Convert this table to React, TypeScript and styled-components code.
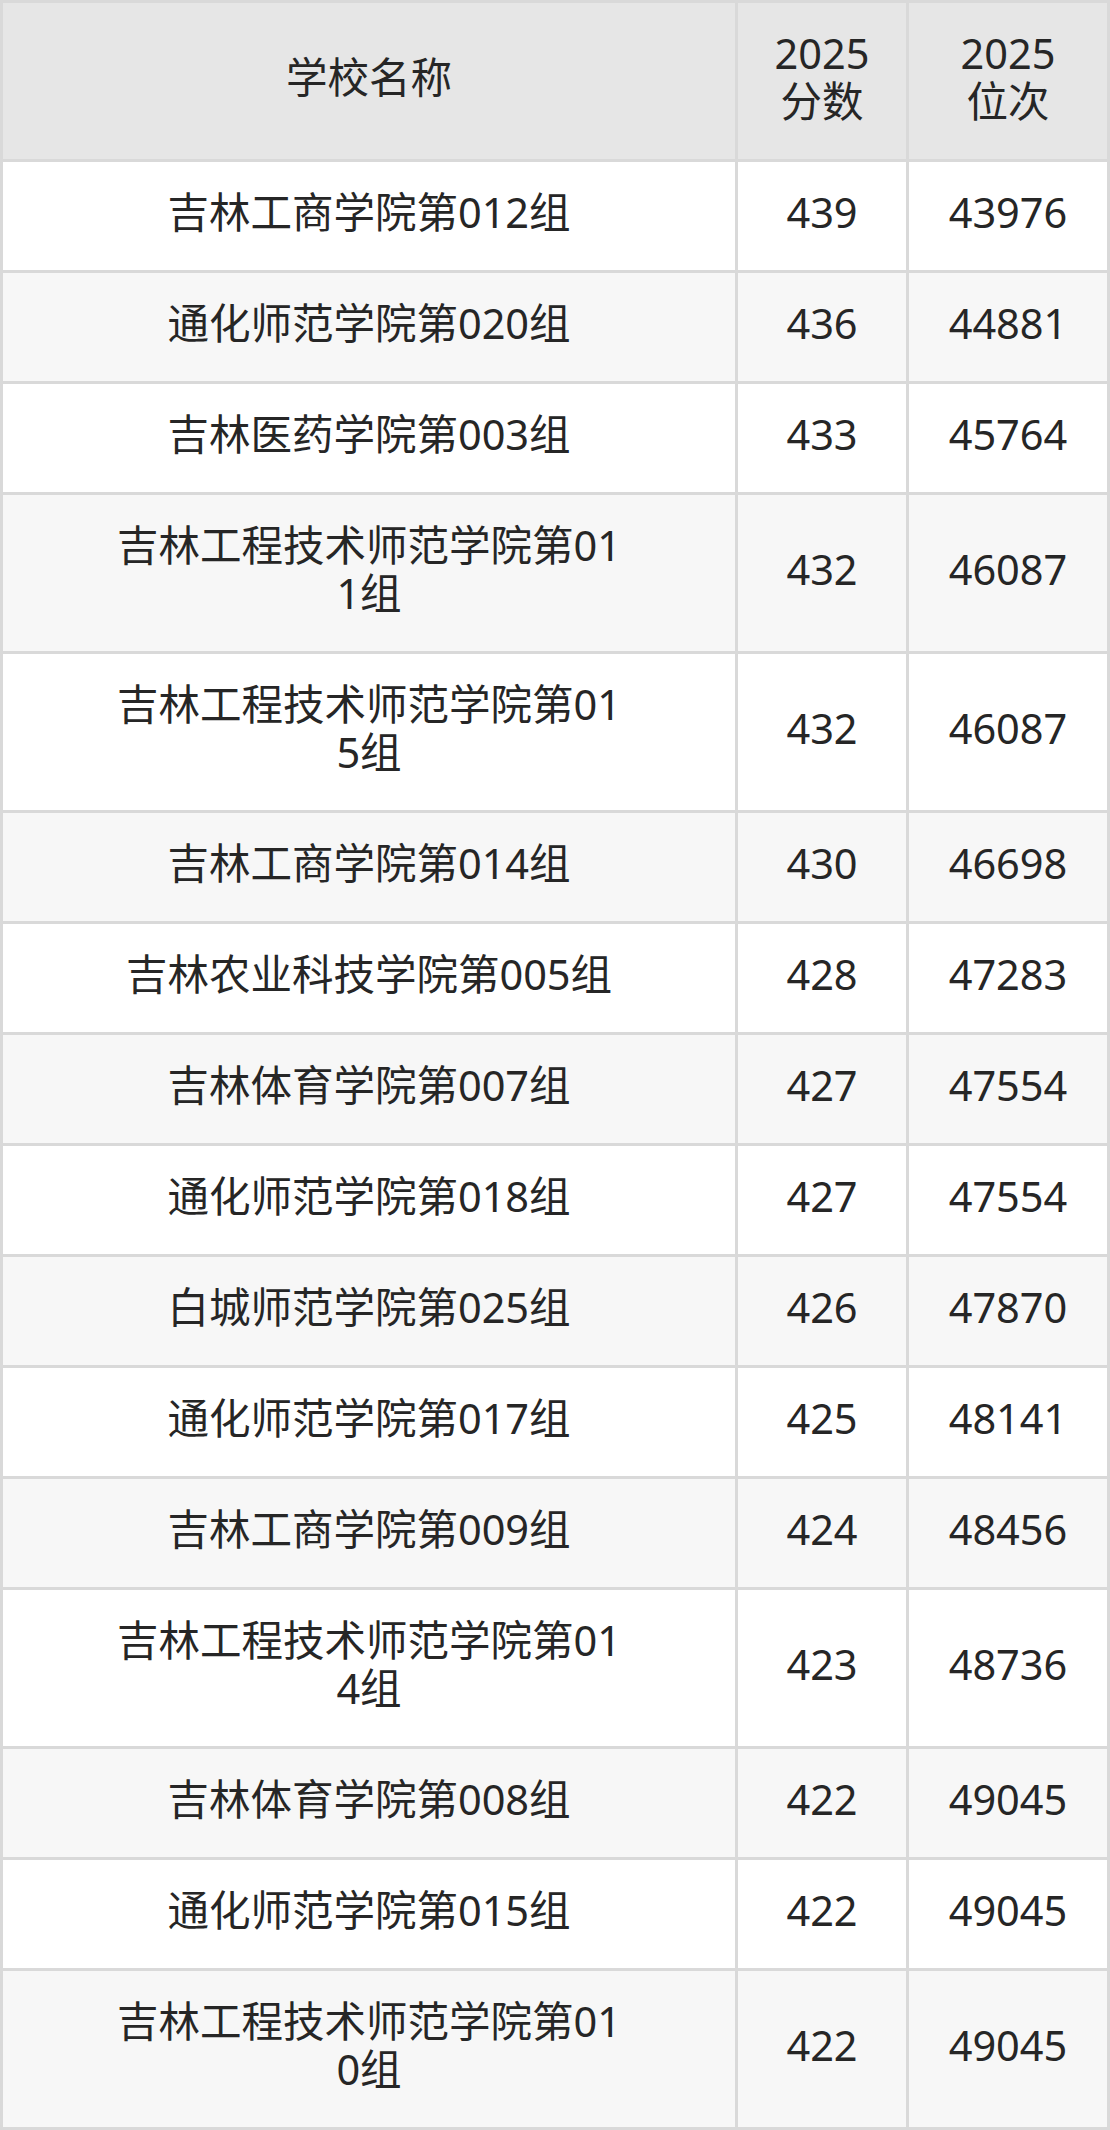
import styled, { createGlobalStyle } from 'styled-components';

const GlobalStyle = createGlobalStyle`
  html, body {
    margin: 0;
    padding: 0;
    background: #ffffff;
  }
  body {
    font-family: "Noto Sans", "Noto Sans CJK SC", sans-serif;
    color: #262626;
  }
`;

const Table = styled.div`
  display: grid;
  grid-template-columns: 732px 168px 198px;
  gap: 3px;
  padding: 3px;
  width: 1110px;
  box-sizing: border-box;
  background-color: #d9d9d9;
`;

const Cell = styled.div<{ $variant: 'head' | 'odd' | 'even'; $wide?: boolean }>`
  display: flex;
  align-items: center;
  justify-content: center;
  text-align: center;
  box-sizing: border-box;
  padding: 26px ${(p) => (p.$wide ? '108px' : '34px')} 34px;
  font-size: 41.5px;
  line-height: 48px;
  word-break: ${(p) => (p.$wide ? 'break-all' : 'normal')};
  background-color: ${(p) =>
    p.$variant === 'head' ? '#e6e6e6' : p.$variant === 'even' ? '#f7f7f7' : '#ffffff'};
`;

type Row = { name: string; score: number; rank: number };

const rows: Row[] = [
  { name: '吉林工商学院第012组', score: 439, rank: 43976 },
  { name: '通化师范学院第020组', score: 436, rank: 44881 },
  { name: '吉林医药学院第003组', score: 433, rank: 45764 },
  { name: '吉林工程技术师范学院第011组', score: 432, rank: 46087 },
  { name: '吉林工程技术师范学院第015组', score: 432, rank: 46087 },
  { name: '吉林工商学院第014组', score: 430, rank: 46698 },
  { name: '吉林农业科技学院第005组', score: 428, rank: 47283 },
  { name: '吉林体育学院第007组', score: 427, rank: 47554 },
  { name: '通化师范学院第018组', score: 427, rank: 47554 },
  { name: '白城师范学院第025组', score: 426, rank: 47870 },
  { name: '通化师范学院第017组', score: 425, rank: 48141 },
  { name: '吉林工商学院第009组', score: 424, rank: 48456 },
  { name: '吉林工程技术师范学院第014组', score: 423, rank: 48736 },
  { name: '吉林体育学院第008组', score: 422, rank: 49045 },
  { name: '通化师范学院第015组', score: 422, rank: 49045 },
  { name: '吉林工程技术师范学院第010组', score: 422, rank: 49045 },
];

export default function App() {
  return (
    <>
      <GlobalStyle />
      <Table>
        <Cell $variant="head" $wide>
          学校名称
        </Cell>
        <Cell $variant="head">2025分数</Cell>
        <Cell $variant="head">2025位次</Cell>
        {rows.map((r, i) => {
          const v = i % 2 === 0 ? 'odd' : 'even';
          return (
            <>
              <Cell key={`n${i}`} $variant={v} $wide>
                {r.name}
              </Cell>
              <Cell key={`s${i}`} $variant={v}>
                {r.score}
              </Cell>
              <Cell key={`r${i}`} $variant={v}>
                {r.rank}
              </Cell>
            </>
          );
        })}
      </Table>
    </>
  );
}
